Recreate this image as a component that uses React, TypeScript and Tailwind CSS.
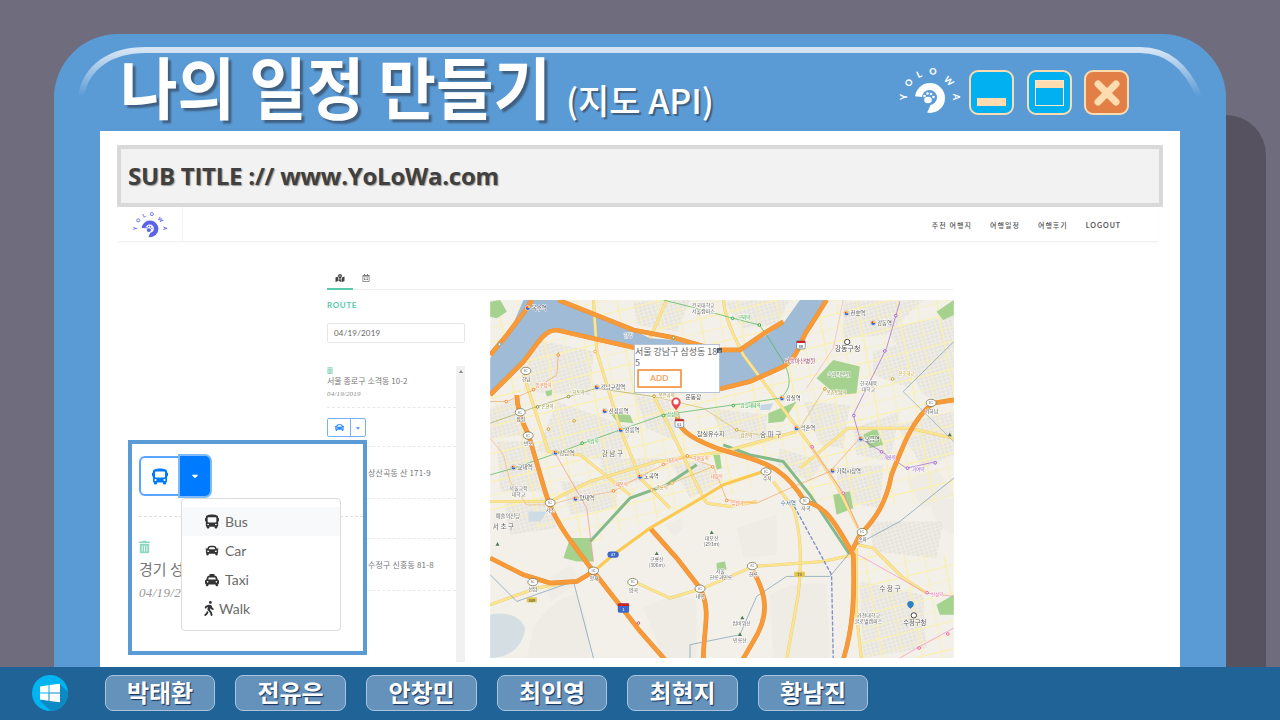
import React from "react";
import { FaBus, FaCar, FaTaxi, FaWalking, FaTrashAlt, FaMapMarkedAlt, FaRegCalendarAlt, FaCaretDown } from "react-icons/fa";

const KR = "font-['Noto_Sans_CJK_KR','Noto_Sans',sans-serif]";

function Logo({ color, hole, className }: { color: string; hole: string; className: string }) {
  const letters: [string, number, number, number][] = [
    ["Y", 5, 31, -90], ["O", 10.500, 16.500, -60], ["L", 21, 8, -25], ["O", 35, 5, 5], ["W", 51, 15, 45], ["A", 58, 31, 90],
  ];
  return (
    <svg viewBox="0 0 64 50" className={className}>
      {letters.map(([l, x, y, r], i) => (
        <text key={i} x={x} y={y} fill={color} fontSize="9" fontWeight="900" fontFamily="Lato, sans-serif" textAnchor="middle" dominantBaseline="central" transform={`rotate(${r} ${x} ${y})`}>{l}</text>
      ))}
      <circle cx="32" cy="32" r="15" fill={color} />
      <circle cx="31.500" cy="31.500" r="7.500" fill={hole} />
      <path d="M14 30L24 31L33 38L28 49L12 49Z" fill={hole} />
      <ellipse cx="30" cy="34" rx="3.800" ry="3.300" fill={color} />
      <circle cx="26.500" cy="30" r="1.300" fill={color} />
      <circle cx="29.500" cy="27.500" r="1.300" fill={color} />
      <circle cx="33" cy="28" r="1.300" fill={color} />
      <circle cx="35.500" cy="31" r="1.300" fill={color} />
    </svg>
  );
}

const highways = [
  "M205 15L330 65L430 105L550 128L680 165L750 165L830 110L880 80",
  "M0 300L100 200C140 150 160 105 200 105L330 135L440 160L560 200M690 282L780 260L880 215C930 185 930 130 960 95L1010 15",
  "M80 300C80 350 105 400 115 420L165 590C190 680 250 750 310 830L400 945L450 1010L525 1095",
  "M0 790L100 840L180 865L260 860L310 830",
  "M480 700L560 790L630 880C665 950 640 1000 640 1095",
  "M560 350C560 400 590 425 680 460L780 490C840 510 890 530 945 620C1000 630 1030 670 1090 780C1095 900 1090 1000 1060 1095",
  "M1392 315L1330 325C1270 370 1240 450 1205 540C1190 620 1160 670 1110 720L1085 770",
  "M790 830C830 900 840 960 790 1040L758 1095",
  "M0 180L50 120L110 40L125 15",
];
const yellows = [
  "M530 15L480 130M490 300L540 400L630 590L650 625",
  "M700 15C705 70 730 120 760 180L820 260L900 370L960 450L1040 570L1105 700",
  "M0 930L140 880L260 860L310 830L370 780L480 700L600 630L700 570L820 530",
  "M850 560L910 640C935 720 935 800 925 900L890 1095",
  "M1105 750L1150 760L1240 850L1310 895",
  "M1100 760L1100 960L1115 1095",
  "M310 15L320 170L390 400L450 550L540 640",
  "M100 240L175 470L270 480L420 600",
  "M0 620L180 620L300 560L500 500L700 470L920 410",
  "M1392 430L1260 400L1075 400L930 520",
  "M430 860L540 910L640 880L790 815L1000 800L1090 780",
  "M650 625L720 635L800 620",
];
const subway: [string, string][] = [
  ["M0 540L70 520L200 475L280 445L390 405L520 360L730 330L870 310C910 280 900 240 880 200L830 120L808 90L730 70L600 35L520 15", "#41b34c"],
  ["M370 590L450 545L520 510L590 485L670 515L710 615L800 625L900 580L1020 530L1110 430", "#f5a25d"],
  ["M0 385L140 335L235 305L320 280L490 305", "#a4a84a"],
  ["M1230 20L1190 160L1130 280L1090 360L1110 430L1175 470L1250 520L1340 500", "#a05fd0"],
  ["M960 450L1060 595L1105 700", "#ef7fb0"],
  ["M1105 780L1310 895L1392 905", "#ef8fc0"],
  ["M1392 1000L1300 1050L1230 1090", "#ef8fc0"],
  ["M600 1090L600 1050L750 1020L800 905L890 845L1020 845L1100 750L1230 680L1392 550", "#6f97b4"],
  ["M1240 290L1392 140", "#6f97b4"],
  ["M1240 290L1392 440", "#8aa8bd"],
  ["M0 840L80 920L250 860L310 1090", "#6f97b4"],
  ["M0 430L40 480L60 560L110 630L180 630L250 610L370 590", "#f5b57d"],
  ["M195 475L290 640L310 800", "#e9937f"],
  ["M0 320L50 320L130 285L200 240L205 170", "#f5a25d"],
  ["M485 585L545 565L670 515", "#e8b04a"],
  ["M740 405L850 430M1005 280L930 400M740 405L640 340L490 305", "#d8b95c"],
  ["M950 280L1030 160L1060 15", "#f3b6a8"],
];
const greens = [
  "M300 740L420 610L530 570L620 510",
  "M700 450L780 480L880 500L960 600L1020 690L1080 780",
];
const parks = [
  "M980 250L1030 195L1110 215L1100 295L1040 300Z",
  "M360 355L420 360L430 385L380 380Z",
  "M240 730L300 730L310 800L260 800L220 790Z",
  "M0 20L30 15L50 50L20 70L0 65Z",
  "M835 355L920 320L880 380L835 385Z",
  "M1340 50L1392 15L1392 60L1360 75Z",
  "M1340 930L1392 900L1392 960L1350 960Z",
  "M1120 420L1160 400L1180 450L1140 460Z",
  "M680 805L705 800L710 825L680 825Z",
  "M670 480L690 480L695 520L680 525Z",
  "M165 290L185 285L185 300L170 305Z",
  "M1030 600L1080 590L1090 640L1040 660Z",
];
const hills = [
  "M520 690L575 670L580 700L555 725Z",
  "M1320 620L1392 610L1392 720L1340 690Z",
  "M170 860L240 810L270 860L180 920Z",
  "M1250 560L1340 520L1392 600L1300 640Z",
  "M740 700L860 660L860 780L760 790Z",
  "M130 1000C170 930 230 900 260 900C290 960 300 1040 300 1090H110Z",
  "M460 940C520 900 600 900 620 920L620 1090H520Z",
  "M840 900C900 860 980 860 1010 870L1020 1090H850Z",
];
const blocks = [
  "M120 130L310 170L300 300L100 290Z", "M200 320L430 400L380 500L140 470Z", "M20 440L130 440L160 590L30 590Z",
  "M700 20L900 15L860 90L760 100Z", "M1060 20L1300 15L1190 120L1060 130Z", "M1150 170L1290 130L1260 280L1150 240Z",
  "M660 340L830 360L830 440L700 430Z", "M940 320L1080 330L1060 460L990 450Z", "M1090 400L1230 350L1200 500L1100 480Z",
  "M870 460L1000 500L960 560L860 510Z", "M1140 680L1360 680L1340 790L1150 770Z", "M1040 520L1180 510L1170 640L1050 620Z",
  "M1110 860L1300 900L1310 1060L1120 1090Z", "M40 620L170 610L200 700L60 720Z", "M210 560L380 560L380 640L240 660Z",
  "M430 20L600 15L560 110L440 90Z", "M330 490L510 490L460 560L340 570Z", "M1220 390L1392 350L1392 480L1300 520Z",
  "M430 300L540 320L560 440L470 400Z", "M0 340L90 310L110 420L0 430Z", "M1190 100L1392 60L1392 330L1300 300Z",
  "M540 500L640 500L700 560L600 610Z",
];
const hgrid = Array.from({ length: 26 }, (_, i) => i);

const stations: [string, number, number][] = [
  ["목수역", 125, 44], ["천호역", 1082, 60], ["강동역", 1162, 89], ["강남구청역", 332, 282], ["선정릉역", 356, 353],
  ["선릉역", 404, 410], ["강남역", 208, 479], ["교대역", 82, 523], ["양재역", 268, 617], ["도곡역", 462, 551],
  ["잠실역", 888, 315], ["석촌역", 932, 405], ["오금역", 1125, 437], ["가락시장역", 1040, 533],
];
const plain: [string, number, number, number, string][] = [
  ["건국대학교", 640, 37, 15, "#666"], ["서울캠퍼스", 640, 54, 15, "#666"], ["강동구청", 1073, 168, 21, "#555"], ["서울아산병원", 930, 203, 17, "#a0526d"],
  ["올림픽공원", 1047, 243, 15, "#5c8b4a"], ["한국체육", 1136, 271, 14, "#666"], ["대학교", 1136, 289, 14, "#666"],
  ["운동장", 610, 313, 17, "#555"], ["잠실유수지", 662, 423, 18, "#555"], ["송 파 구", 842, 427, 20, "#666"], ["강 남 구", 367, 483, 20, "#666"],
  ["서울교육", 85, 585, 15, "#666"], ["대학교", 85, 603, 15, "#666"], ["예술의전당", 53, 669, 16, "#666"], ["서 초 구", 40, 704, 20, "#666"],
  ["수서역", 895, 630, 17, "#47749e"], ["자곡", 948, 645, 15, "#555"], ["수서", 832, 557, 14, "#555"], ["대모산", 665, 736, 15, "#666"], ["(293m)", 665, 754, 15, "#666"],
  ["구룡산", 500, 800, 15, "#666"], ["(306m)", 500, 818, 15, "#666"], ["서울", 691, 834, 15, "#666"], ["헌릉과인릉", 693, 852, 15, "#666"],
  ["헌릉", 790, 843, 15, "#555"], ["양재", 312, 856, 15, "#555"], ["염곡", 430, 891, 15, "#555"], ["내곡", 630, 911, 15, "#555"], ["선암", 128, 890, 15, "#555"],
  ["범바위산", 755, 990, 15, "#666"], ["인릉산", 750, 1041, 15, "#666"], ["수 정 구", 1200, 889, 20, "#666"], ["수정구청", 1275, 990, 19, "#555"],
  ["가천대학교", 1136, 967, 15, "#666"], ["글로벌캠퍼스", 1136, 985, 15, "#666"], ["서하남", 1325, 353, 15, "#555"], ["송파", 1118, 740, 14, "#555"],
  ["서초", 180, 651, 14, "#555"], ["잠원", 92, 379, 14, "#555"], ["반포", 114, 449, 14, "#555"], ["한남", 108, 257, 14, "#555"], ["한강", 415, 125, 15, "#6e8aa5"],
  ["구룡역", 515, 584, 13, "#c98a1e"], ["매봉역", 395, 573, 13, "#e8743b"], ["대치역", 548, 502, 13, "#e8743b"], ["학여울역", 632, 496, 13, "#e8743b"], ["대청역", 680, 550, 13, "#e8743b"], ["일원역", 742, 631, 13, "#e8743b"],
  ["삼성역", 549, 363, 13, "#2ea83c"], ["역삼역", 308, 445, 13, "#2ea83c"], ["잠실새내역", 782, 335, 13, "#2ea83c"], ["구의역", 762, 71, 13, "#2ea83c"], ["천호대교", 1250, 240, 13, "#c9a227"],
  ["압구정역", 160, 275, 13, "#e8743b"], ["학동역", 265, 297, 13, "#8d9130"], ["봉은사역", 530, 305, 13, "#a68a2c"], ["삼전역", 770, 425, 13, "#a68a2c"], ["몽촌토성역", 1040, 297, 13, "#a68a2c"], ["거여역", 1285, 529, 13, "#8e4fc0"], ["개롱역", 1200, 493, 13, "#8e4fc0"], ["산성역", 1342, 904, 13, "#e25a9b"],
  ["논현역", 172, 338, 13, "#8d9130"],
];
const ics: [number, number][] = [[107, 228], [90, 352], [114, 422], [180, 624], [310, 828], [428, 862], [128, 862], [630, 882], [787, 814], [828, 530], [945, 618], [1117, 712], [1324, 324]];
const dots: [number, number, string][] = [
  [204, 180, "#f58a2e"], [315, 170, "#e8b04a"], [130, 284, "#f58a2e"], [48, 320, "#f58a2e"], [142, 336, "#8d9130"], [235, 305, "#8d9130"], [520, 362, "#2ea83c"], [276, 445, "#2ea83c"],
  [730, 332, "#2ea83c"], [728, 70, "#2ea83c"], [808, 90, "#2ea83c"], [175, 403, "#c9a227"], [252, 378, "#c9a227"], [492, 304, "#c9a227"], [740, 405, "#c9a227"], [370, 588, "#f58a2e"], [520, 509, "#f58a2e"],
  [592, 483, "#f58a2e"], [668, 516, "#f58a2e"], [710, 617, "#f58a2e"], [485, 585, "#e8b04a"], [546, 565, "#e8b04a"], [1005, 282, "#c9a227"], [1208, 252, "#c9a227"], [1185, 168, "#a05fd0"], [1218, 62, "#a05fd0"],
  [1092, 362, "#a05fd0"], [1175, 471, "#a05fd0"], [1253, 520, "#a05fd0"], [1336, 504, "#a05fd0"], [967, 456, "#ef5f9f"], [1060, 595, "#ef5f9f"], [1312, 894, "#ef5f9f"], [1374, 1018, "#ef5f9f"], [1288, 1060, "#ef5f9f"], [445, 985, "#d94a5e"], [28, 148, "#59b7c9"], [550, 128, "#8d9130"],
];
const peaks: [number, number][] = [[665, 712], [500, 775], [22, 747], [757, 968], [750, 1018], [1380, 418]];

function MapLayer() {
  return (
    <svg viewBox="0 15 1392 1075" className="block w-[464px] h-[358px] blur-[0.4px]">
      <defs>
        <pattern id="urban" width="13" height="11" patternUnits="userSpaceOnUse" patternTransform="rotate(-16)">
          <rect width="13" height="11" fill="#f2efe9" />
          <rect x="1" y="1" width="10" height="8" fill="#e6e3dc" />
        </pattern>
        <clipPath id="gridZone">
          <path d="M0 15H1392V620L1010 640L850 560L640 620L300 745L0 650ZM1100 780H1392V1090H1100Z" />
        </clipPath>
      </defs>
      <rect x="0" y="15" width="1392" height="1075" fill="#f3f0ea" />
      {hills.map((d, i) => <path key={i} d={d} fill="#eeece4" />)}
      {blocks.map((d, i) => <path key={i} d={d} fill="url(#urban)" />)}
      <g clipPath="url(#gridZone)">
        {hgrid.map((i) => <path key={`g${i}`} d={`M${-40 + i * 60} ${15}L${160 + i * 60} 1090`} stroke="#faf0a8" strokeWidth="3.500" fill="none" opacity={i % 2 ? 1 : 0.55} />)}
        {hgrid.concat(hgrid.map((n) => n + 26)).map((i) => <path key={`h${i}`} d={`M0 ${100 + i * 42}L1392 ${-240 + i * 42}`} stroke="#faf1ae" strokeWidth="3.500" fill="none" opacity={i % 2 ? 1 : 0.55} />)}
      </g>
      <path d="M100 15L210 15L330 65L430 105L480 130L550 135L680 165L750 170L830 120L880 85L930 15L1010 15L960 95C930 130 930 185 880 215L780 260L690 282L440 160L330 135L200 105C160 105 140 150 100 200L0 300L0 190L50 130Z" fill="#a0bbd6" />
      <path d="M0 960C40 950 90 960 105 1000C100 1060 50 1090 0 1090Z" fill="#d5dfe3" />
      <path d="M115 650L170 650L150 680L115 680Z" fill="#ccdbe6" />
      <path d="M810 330L850 325L840 345L810 345Z" fill="#c5d6e3" />
      {parks.map((d, i) => <path key={i} d={d} fill="#a5d28f" />)}
      {greens.map((d, i) => <path key={i} d={d} stroke="#84b98a" strokeWidth="9" fill="none" />)}
      {yellows.map((d, i) => <g key={i} fill="none"><path d={d} stroke="#e6cd78" strokeWidth="9" /><path d={d} stroke="#fde48f" strokeWidth="7" /></g>)}
      {subway.map(([d, c], i) => <path key={i} d={d} stroke={c} strokeWidth="2" fill="none" />)}
      <path d="M905 620L1025 840L1030 1090" stroke="#7f8fc7" strokeWidth="4" strokeDasharray="12 5" fill="none" />
      {highways.map((d, i) => <g key={i} fill="none"><path d={d} stroke="#e28f3e" strokeWidth="14" /><path d={d} stroke="#f99a38" strokeWidth="12" /></g>)}
      <path d="M310 830L370 780L480 700L600 630L700 570L820 530" stroke="#fcc94e" strokeWidth="8" fill="none" />
      {dots.map(([x, y, c], i) => <circle key={i} cx={x} cy={y} r="4" fill="#fff" stroke={c} strokeWidth="3" />)}
      {stations.map(([t, x, y], i) => (
        <g key={i}>
          <circle cx={x - 12} cy={y - 5} r="8" fill="#fff" stroke="#888" strokeWidth="1" />
          <path d={`M${x - 18} ${y - 5}a6 6 0 0 1 6-6v6z`} fill="#e33" />
          <path d={`M${x - 12} ${y - 11}a6 6 0 0 1 6 6h-6z`} fill="#fb0" />
          <path d={`M${x - 18} ${y - 5}a6 6 0 0 0 12 0z`} fill="#36c" />
          <text x={x} y={y} fontSize="16" fill="#555" stroke="#fff" strokeWidth="2.500" paintOrder="stroke" fontFamily="Noto Sans CJK KR, sans-serif">{t}</text>
        </g>
      ))}
      {ics.map(([x, y], i) => (
        <g key={i}>
          <ellipse cx={x} cy={y} rx="15" ry="11" fill="#fff" stroke="#7a7a55" strokeWidth="2.500" />
          <text x={x} y={y + 4} fontSize="11" fill="#444" textAnchor="middle" fontFamily="Liberation Sans">IC</text>
        </g>
      ))}
      {peaks.map(([x, y], i) => <path key={i} d={`M${x - 6} ${y + 6}L${x} ${y - 5}L${x + 6} ${y + 6}Z`} fill="#4e7a56" />)}
      {plain.map(([t, x, y, s, c], i) => (
        <text key={i} x={x} y={y} fontSize={s} fill={c} textAnchor="middle" fontFamily="Noto Sans CJK KR, sans-serif" stroke="#fff" strokeWidth="2.500" paintOrder="stroke">{t}</text>
      ))}
      {([[568, 385, "61"], [933, 150, "88"]] as [number, number, string][]).map(([x, y, t], i) => (
        <g key={i}>
          <rect x={x - 13} y={y - 12} width="26" height="24" rx="4" fill="#fff" stroke="#47749e" strokeWidth="2" />
          <rect x={x - 13} y={y - 12} width="26" height="6" fill="#c22" />
          <text x={x} y={y + 9} fontSize="11" textAnchor="middle" fill="#234" fontFamily="Liberation Sans">{t}</text>
        </g>
      ))}
      <rect x="383" y="926" width="34" height="28" rx="5" fill="#3f69c9" />
      <rect x="383" y="926" width="34" height="8" fill="#c22" />
      <text x="400" y="949" fontSize="13" fill="#fff" textAnchor="middle" fontFamily="Liberation Sans">1</text>
      <rect x="352" y="770" width="34" height="19" rx="9" fill="#3f69c9" />
      <text x="369" y="785" fontSize="13" fill="#fff" textAnchor="middle" fontFamily="Liberation Sans">47</text>
      <rect x="913" y="831" width="32" height="16" fill="#e3c64f" />
      <text x="929" y="845" fontSize="12" fill="#444" textAnchor="middle" fontFamily="Liberation Sans">73</text>
      <rect x="110" y="908" width="30" height="15" fill="#e3c64f" />
      <text x="125" y="921" fontSize="12" fill="#444" textAnchor="middle" fontFamily="Liberation Sans">309</text>
      <circle cx="1072" cy="141" r="8" fill="#fff" stroke="#444" strokeWidth="3" />
      <circle cx="1272" cy="962" r="8" fill="#fff" stroke="#444" strokeWidth="3" />
      <path d="M1262 942c-9-6-10-11-10-14 0-6 5-9 10-9s10 3 10 9c0 3-1 8-10 14z" fill="#2f7fc1" />
      <path d="M558 346c-9-11-14-17-14-24a14 14 0 0 1 28 0c0 7-5 13-14 24z" fill="#e8454f" />
      <circle cx="558" cy="321" r="8" fill="#fff" />
    </svg>
  );
}

function MapPanel() {
  return (
    <div className="relative w-[464px] h-[358px] shrink-0">
      <MapLayer />
      <div className={`absolute left-[144px] top-[44px] w-[86px] h-[49px] bg-white border border-[#b9c3d6] ${KR} text-[#666] text-[9px] leading-[11px]`}>
        <div className="flex items-start justify-between pt-[1px] pr-[3px]">
          <span className="whitespace-nowrap">서울 강남구 삼성동 18</span>
          <span className="flex items-center justify-center w-[5px] h-[5px] mt-[2px] bg-[#555] text-white text-[5px] leading-none">×</span>
        </div>
        <div>5</div>
        <button className="block ml-[2px] mt-[1px] w-[45px] h-[19px] border-2 border-[#f5a25d] rounded-[1px] text-[#f5a25d] text-[8px] font-bold font-['Lato',sans-serif] tracking-wide">ADD</button>
      </div>
    </div>
  );
}

function SideItem({ text }: { text: string }) {
  return <div className={`pl-[41px] pt-[20px] h-[52px] border-b border-dashed border-[#e8e8e8] text-[8px] leading-[11px] tracking-[0.02em] text-[#777] whitespace-nowrap ${KR}`}>{text}</div>;
}

function Sidebar() {
  return (
    <div className="w-[138px] shrink-0 flex flex-col">
      <div className="h-[10px] text-[8px] leading-[10px] font-bold tracking-[0.08em] text-[#5ac8aa] font-['Lato',sans-serif]">ROUTE</div>
      <div className="mt-[13px] h-[20px] border border-[#e6e6e6] rounded-[2px] flex items-center pl-[6px] text-[8px] text-[#666] font-['Lato',sans-serif] tracking-wide">04/19/2019</div>
      <div className="mt-[23px] flex h-[296px]">
        <div className="w-[129px] shrink-0">
          <div className="h-[42px] border-b border-dashed border-[#e8e8e8] pt-[1px]">
            <FaTrashAlt className="w-[6px] h-[7px] ml-[0px] text-[#8fd6c1]" />
            <div className={`text-[8px] leading-[12px] mt-[1px] text-[#777] whitespace-nowrap ${KR}`}>서울 종로구 소격동 10-2</div>
            <div className="mt-[2px] text-[7px] leading-[10px] italic text-[#888] font-['Liberation_Serif',serif] tracking-wide">04/19/2019</div>
          </div>
          <div className="h-[39px] border-b border-dashed border-[#e8e8e8] pt-[10px]">
            <div className="flex w-[39px] h-[19px] border border-[#72b1ff] rounded-[2px]">
              <div className="w-[23px] flex items-center justify-center border-r border-[#72b1ff]"><FaCar className="w-[11px] h-[9px] text-[#2f8bff]" /></div>
              <div className="flex-1 flex items-center justify-center"><FaCaretDown className="w-[6px] h-[6px] text-[#2f8bff]" /></div>
            </div>
          </div>
          <SideItem text="상산곡동 산 171-9" />
          <div className="h-[40px] border-b border-dashed border-[#e8e8e8]" />
          <SideItem text="수정구 신흥동 81-8" />
        </div>
        <div className="w-[9px] bg-[#f1f1f1] flex justify-center pt-[4px]">
          <div className="w-0 h-0 border-x-[2px] border-b-[3px] border-x-transparent border-b-[#888]" />
        </div>
      </div>
    </div>
  );
}

function MenuItem({ icon, label, active, narrow }: { icon: React.ReactNode; label: string; active?: boolean; narrow?: boolean }) {
  return (
    <div className={`h-[29px] flex items-center text-[14px] text-[#6a6a6a] font-['Lato',sans-serif] ${narrow ? "gap-[5px] pl-[22px]" : "gap-[6px] pl-[23px]"} ${active ? "bg-[#f8f9fa]" : ""}`}>
      {icon}<span>{label}</span>
    </div>
  );
}

function Callout() {
  return (
    <div className="absolute left-[128px] top-[440px] w-[239px] h-[215px] bg-white border-[4px] border-[#5b9bd5]">
      <div className="flex ml-[7px] mt-[12px] w-[71px] h-[40px]">
        <div className="w-[41px] border-2 border-[#5aa6ff] rounded-l-[6px] flex items-center justify-center">
          <FaBus className="w-[16px] h-[17px] text-[#007bff]" />
        </div>
        <div className="w-[30px] bg-[#007bff] rounded-r-[5px] ring-2 ring-[#7fbaff] flex items-center justify-center">
          <FaCaretDown className="w-[10px] h-[10px] text-white" />
        </div>
      </div>
      <div className="ml-[7px] mt-[20px] border-t border-dashed border-[#dedede]" />
      <FaTrashAlt className="ml-[7px] mt-[23px] w-[11px] h-[14px] text-[#8fd6c1]" />
      <div className={`ml-[7px] mt-[4px] text-[15px] leading-[22px] text-[#777] ${KR}`}>경기 성</div>
      <div className="ml-[7px] mt-[4px] text-[13px] leading-[18px] italic text-[#999] font-['Liberation_Serif',serif] tracking-wide">04/19/2</div>
      <div className="absolute left-[49px] top-[54px] w-[160px] h-[133px] bg-white border-[1.500px] border-[#dcdcdc] rounded-[4px] pt-[8px]">
        <MenuItem active icon={<FaBus className="w-[14px] h-[15px] text-[#333]" />} label="Bus" />
        <MenuItem icon={<FaCar className="w-[14px] h-[13px] text-[#333]" />} label="Car" />
        <MenuItem icon={<FaTaxi className="w-[14px] h-[14px] text-[#333]" />} label="Taxi" />
        <MenuItem narrow icon={<FaWalking className="w-[10px] h-[15px] text-[#333]" />} label="Walk" />
      </div>
    </div>
  );
}

function WinButton({ bg, children }: { bg: string; children: React.ReactNode }) {
  return <div className={`w-[45px] h-[45px] rounded-[9px] border-2 border-[#fbdcb0] flex items-center justify-center ${bg}`}>{children}</div>;
}

function Header() {
  return (
    <div className="relative h-[97px] shrink-0 flex items-start pl-[66px] pr-[97px]">
      <svg viewBox="0 0 1172 60" className="absolute left-0 top-[12px] w-[1172px] h-[60px]" fill="none">
        <defs>
          <linearGradient id="arcFade" gradientUnits="userSpaceOnUse" x1="0" y1="50" x2="0" y2="4"><stop offset="0" stopColor="#d6e5f5" stopOpacity="0" /><stop offset="1" stopColor="#d6e5f5" stopOpacity="1" /></linearGradient>
        </defs>
        <path d="M27 50C32 22 55 4 92 4H1086C1116 4 1134 24 1145 50" stroke="url(#arcFade)" strokeWidth="6" />
      </svg>
      <h1 className={`relative mt-[11px] origin-left scale-y-[1.08] text-[62.500px] leading-[80px] font-bold text-white whitespace-nowrap [text-shadow:3px_3px_2px_#3f5f80] ${KR}`}>나의 일정 만들기</h1>
      <span className={`relative mt-[40px] ml-[15px] text-[34px] leading-[52px] font-medium text-white whitespace-nowrap [text-shadow:2px_2px_1px_#3f5f80] ${KR}`}>(지도 API)</span>
      <div className="relative ml-auto mt-[36px] flex items-start">
        <Logo color="#ffffff" hole="#5b9bd5" className="w-[64px] h-[50px] mr-[7px] -mt-[4px]" />
        <WinButton bg="bg-[#00b0f0]"><div className="mt-[18px] w-[29px] h-[8px] bg-[#fedcb0]" /></WinButton>
        <div className="w-[13px]" />
        <WinButton bg="bg-[#00b0f0]">
          <div className="w-[29px] h-[26px] border border-[#fee6c8]"><div className="h-[7px] bg-[#fedcb0]" /></div>
        </WinButton>
        <div className="w-[12px]" />
        <WinButton bg="bg-[#e27f47]">
          <svg viewBox="0 0 30 30" className="w-[30px] h-[30px]"><path d="M6 6L24 24M24 6L6 24" stroke="#fedcb0" strokeWidth="7" strokeLinecap="round" /></svg>
        </WinButton>
      </div>
    </div>
  );
}

function SiteNav() {
  const links = ["주천 여행지", "여행일정", "여행후기"];
  return (
    <div className="ml-[1px] mr-[5px] h-[35px] shrink-0 flex items-center border-b border-[#f2f2f2] shadow-[0_1px_2px_rgba(0,0,0,0.03)]">
      <div className="w-[65px] h-full flex items-center justify-center border-r border-[#f3f3f3] pt-[2px]">
        <Logo color="#5b63e8" hole="#ffffff" className="w-[36px] h-[28px]" />
      </div>
      <div className="ml-auto flex items-center gap-[18px] pr-[37px] text-[7px] text-[#555] pt-[2px]">
        {links.map((l) => <span key={l} className={`tracking-[0.15em] font-medium ${KR}`}>{l}</span>)}
        <span className="font-bold tracking-[0.14em] font-['Lato',sans-serif]">LOGOUT</span>
      </div>
    </div>
  );
}

function TaskButton({ name, w }: { name: string; w: string }) {
  return (
    <div className={`h-[36px] ${w} rounded-[8px] border border-[#a9c4dc] bg-[#6592bb] flex items-center justify-center text-[24px] leading-[34px] pb-[3px] font-bold text-white [text-shadow:1px_1px_1px_#12305a] ${KR}`}>{name}</div>
  );
}

function Taskbar() {
  return (
    <div className="h-[53px] shrink-0 bg-[#1f6397] flex items-center pb-[1px]">
      <div className="ml-[32px] w-[36px] h-[36px] rounded-full overflow-hidden bg-[#00b4f1] shrink-0">
        <svg viewBox="0 0 36 36" className="w-[36px] h-[36px]">
          <path d="M8 26L19 36H36V17L28 9Z" fill="#0b8ac4" />
          <path d="M8 11.500L16.500 10.300V17.500H8ZM17.500 10.100L28 8.700V17.500H17.500ZM8 18.500H16.500V25.700L8 24.500ZM17.500 18.500H28V27.300L17.500 25.900Z" fill="#fff" />
        </svg>
      </div>
      <div className="ml-[37px] flex gap-[20px]">
        <TaskButton name="박태환" w="w-[110px]" />
        <TaskButton name="전유은" w="w-[111px]" />
        <TaskButton name="안창민" w="w-[111px]" />
        <TaskButton name="최인영" w="w-[110px]" />
        <TaskButton name="최현지" w="w-[111px]" />
        <TaskButton name="황남진" w="w-[110px]" />
      </div>
    </div>
  );
}

export default function App() {
  return (
    <div className="relative w-[1280px] h-[720px] overflow-hidden bg-[#6f6c7d] flex flex-col">
      <div className="flex-1 min-h-0 flex pt-[34px] pl-[54px]">
        <div className="w-[1172px] shrink-0 bg-[#5b9bd5] rounded-t-[64px] flex flex-col">
          <Header />
          <div className="flex-1 min-h-0 mx-[46px] bg-white pt-[14px] px-[17px] flex flex-col overflow-hidden">
            <div className={`h-[62px] shrink-0 border-[4px] border-[#d9d9d9] bg-[#f2f2f2] flex items-center pl-[7px] text-[24px] font-bold text-[#404040] [text-shadow:1px_1px_1px_#999] font-['Open_Sans',sans-serif] tracking-[-0.01em]`}>SUB TITLE :// www.YoLoWa.com</div>
            <SiteNav />
            <div className="ml-[210px] w-[626px] mt-[27px] h-[21px] shrink-0 border-b border-[#eeeeee] flex">
              <div className="w-[26px] h-[21px] border-b-2 border-[#5ac8aa] flex items-start justify-center pt-[5px]"><FaMapMarkedAlt className="w-[10px] h-[8px] text-[#444]" /></div>
              <div className="w-[26px] flex items-start justify-center pt-[5px]"><FaRegCalendarAlt className="w-[8px] h-[8px] text-[#777]" /></div>
            </div>
            <div className="ml-[210px] flex gap-[25px] pt-[10px]">
              <Sidebar />
              <MapPanel />
            </div>
          </div>
        </div>
        <div className="mt-[81px] w-[40px] shrink-0 bg-[#565260] rounded-tr-[40px]" />
      </div>
      <Taskbar />
      <Callout />
    </div>
  );
}
